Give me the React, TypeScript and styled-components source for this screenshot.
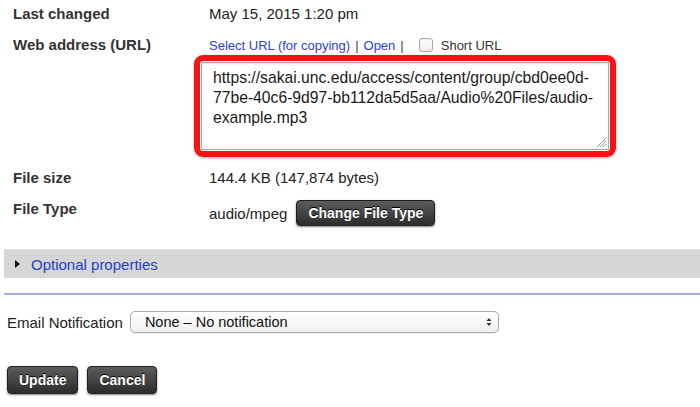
import React from "react";
import styled, { createGlobalStyle } from "styled-components";

const GlobalStyle = createGlobalStyle`
  html, body {
    margin: 0;
    background: #fff;
    font-family: "Liberation Sans", Arial, Helvetica, sans-serif;
    color: #222;
  }
`;

const Page = styled.div`
  width: 700px;
  height: 407px;
  overflow: hidden;
`;

const Props = styled.div`
  padding: 5px 0 0 13px;
`;

const Row = styled.div<{ $top?: number }>`
  display: flex;
  align-items: flex-start;
  margin-top: ${(p) => p.$top ?? 0}px;
`;

const Label = styled.div`
  width: 196px;
  flex-shrink: 0;
  font-size: 15px;
  line-height: 18px;
  font-weight: bold;
  color: #333;
`;

const Value = styled.div`
  font-size: 15px;
  line-height: 18px;
  color: #222;
`;

const Column = styled.div`
  display: flex;
  flex-direction: column;
`;

const LinkLine = styled.div`
  display: flex;
  align-items: center;
  height: 18px;
  font-size: 13px;
  color: #333;
`;

const Link = styled.a`
  color: #2545cf;
  text-decoration: none;
  cursor: pointer;
`;

const Sep = styled.span`
  margin: 0 5px;
  color: #4a4030;
`;

const CheckBox = styled.span`
  width: 12px;
  height: 12px;
  margin: 0 8px 0 10px;
  border: 1px solid #a9a9a9;
  border-radius: 3px;
  background: linear-gradient(#fff, #ececec);
  box-shadow: inset 0 1px 1px rgba(0, 0, 0, 0.08);
`;

const RedFrame = styled.div`
  margin: 1px 0 0 -15px;
  width: 408px;
  padding: 1px;
  border: 6px solid #f21414;
  border-radius: 9px;
  box-shadow: 0 1px 3px rgba(0, 0, 0, 0.35);
`;

const UrlBox = styled.div`
  position: relative;
  height: 78px;
  padding: 5px 11px 3px 11px;
  border: 1px solid #a8a8a8;
  box-shadow: inset 0 1px 2px rgba(0, 0, 0, 0.12);
  font-size: 15.7px;
  line-height: 20px;
  color: #1a1a1a;
`;

const UrlLine = styled.span`
  display: block;
  white-space: nowrap;
`;

const Grip = styled.svg`
  position: absolute;
  right: 1px;
  bottom: 1px;
`;

const InlineValue = styled.div`
  display: flex;
  align-items: center;
  gap: 9px;
  height: 26px;
  font-size: 15px;
  color: #222;
`;

const DarkButton = styled.button<{ $h?: number }>`
  height: ${(p) => p.$h ?? 26}px;
  padding: 0 11px;
  border: 1px solid #1e1e1e;
  border-radius: 4px;
  background: linear-gradient(#5c5c5c, #2c2c2c);
  box-shadow: 0 1px 2px rgba(0, 0, 0, 0.5);
  color: #fff;
  font-family: "Liberation Sans", Arial, sans-serif;
  font-size: 14px;
  font-weight: bold;
  text-shadow: 0 -1px 0 #000;
  cursor: pointer;
`;

const Bar = styled.div`
  display: flex;
  align-items: center;
  margin: 23px 0 0 4px;
  height: 29px;
  padding-left: 11px;
  background: #d6d6d6;
  border-top: 1px solid #e2e2e2;
  box-sizing: border-box;
`;

const Triangle = styled.span`
  width: 0;
  height: 0;
  border-top: 4px solid transparent;
  border-bottom: 4px solid transparent;
  border-left: 5px solid #111;
  margin-right: 11px;
`;

const BarLink = styled(Link)`
  font-size: 15px;
  color: #1f3fcc;
`;

const Divider = styled.div`
  margin: 15px 0 0 4px;
  height: 2px;
  background: #a6afe0;
`;

const EmailRow = styled.div`
  display: flex;
  align-items: center;
  gap: 7px;
  margin: 16px 0 0 7px;
  font-size: 15px;
  color: #222;
`;

const SelectBox = styled.div`
  display: flex;
  align-items: center;
  justify-content: space-between;
  box-sizing: border-box;
  width: 369px;
  height: 22px;
  padding: 0 6px 0 14px;
  border: 1px solid #ababab;
  border-radius: 5px;
  background: linear-gradient(#fff, #efefef);
  box-shadow: 0 1px 1px rgba(0, 0, 0, 0.08);
  font-size: 14.5px;
  color: #111;
`;

const Actions = styled.div`
  display: flex;
  gap: 9px;
  margin: 33px 0 0 7px;
`;

export default function App() {
  return (
    <Page>
      <GlobalStyle />
      <Props>
        <Row>
          <Label>Last changed</Label>
          <Value>May 15, 2015 1:20 pm</Value>
        </Row>
        <Row $top={13}>
          <Label>Web address (URL)</Label>
          <Column>
            <LinkLine>
              <Link>Select URL (for copying)</Link>
              <Sep>|</Sep>
              <Link>Open</Link>
              <Sep>|</Sep>
              <CheckBox />
              <span>Short URL</span>
            </LinkLine>
            <RedFrame>
              <UrlBox>
                <UrlLine>https://sakai.unc.edu/access/content/group/cbd0ee0d-</UrlLine>
                <UrlLine>77be-40c6-9d97-bb112da5d5aa/Audio%20Files/audio-</UrlLine>
                <UrlLine>example.mp3</UrlLine>
                <Grip width="11" height="11" viewBox="0 0 11 11">
                  <path d="M1 10 L10 1 M4 10 L10 4 M7 10 L10 7" stroke="#9a9a9a" strokeWidth="1" />
                </Grip>
              </UrlBox>
            </RedFrame>
          </Column>
        </Row>
        <Row $top={12}>
          <Label>File size</Label>
          <Value>144.4 KB (147,874 bytes)</Value>
        </Row>
        <Row $top={13}>
          <Label>File Type</Label>
          <InlineValue>
            audio/mpeg
            <DarkButton>Change File Type</DarkButton>
          </InlineValue>
        </Row>
      </Props>
      <Bar>
        <Triangle />
        <BarLink>Optional properties</BarLink>
      </Bar>
      <Divider />
      <EmailRow>
        Email Notification
        <SelectBox>
          None – No notification
          <svg width="6" height="10" viewBox="0 0 6 10">
            <path d="M3 1 L5.5 4 L0.5 4 Z M3 9 L5.5 6 L0.5 6 Z" fill="#333" />
          </svg>
        </SelectBox>
      </EmailRow>
      <Actions>
        <DarkButton $h={28}>Update</DarkButton>
        <DarkButton $h={28}>Cancel</DarkButton>
      </Actions>
    </Page>
  );
}
